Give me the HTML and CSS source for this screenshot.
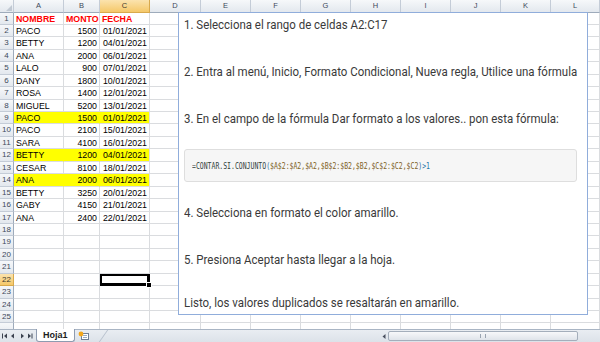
FILE: index.html
```html
<!DOCTYPE html>
<html lang="es">
<head>
  <meta charset="UTF-8" />
  <title>Hoja1 - Valores duplicados</title>
  <link rel="stylesheet" href="styles.css">
</head>
<body>

<div class="workbook">
  <div class="sheet-area">
    <div class="sheet-grid" id="sheetGrid"></div>

    <div class="note">
      <p class="step"><span>1. Selecciona el rango de celdas A2:C17</span></p>
      <p class="step step-gap"><span>2. Entra al menú, Inicio, Formato Condicional, Nueva regla, Utilice una fórmula</span></p>
      <p class="step step-gap"><span>3. En el campo de la fórmula Dar formato a los valores.. pon esta fórmula:</span></p>
      <div class="formula-box">
        <code><span class="f-name">=CONTAR.SI.CONJUNTO</span><span class="f-paren">(</span><span class="f-ref">$A$2:$A2,$A2,$B$2:$B2,$B2,$C$2:$C2,$C2</span><span class="f-paren">)&gt;1</span></code>
      </div>
      <p class="step step-4"><span>4. Selecciona en formato el color amarillo.</span></p>
      <p class="step step-gap"><span>5. Presiona Aceptar hasta llegar a la hoja.</span></p>
      <p class="step step-last"><span>Listo, los valores duplicados se resaltarán en amarillo.</span></p>
    </div>
  </div>

  <div class="tab-bar">
    <div class="tab-nav">
      <svg width="34" height="8" viewBox="0 0 34 8">
        <rect x="2" y="1.5" width="1" height="5" fill="#3b4250"/>
        <path d="M7 1.5 L4 4 L7 6.5Z" fill="#3b4250"/>
        <path d="M14 1.5 L11 4 L14 6.5Z" fill="#3b4250"/>
        <path d="M21 1.5 L24 4 L21 6.5Z" fill="#3b4250"/>
        <path d="M28 1.5 L31 4 L28 6.5Z" fill="#3b4250"/>
        <rect x="31.5" y="1.5" width="1" height="5" fill="#3b4250"/>
      </svg>
    </div>
    <div class="sheet-tab">Hoja1</div>
    <div class="new-tab">
      <svg width="14" height="10" viewBox="0 0 14 10">
        <rect x="4.5" y="2.5" width="7" height="6" fill="#fff" stroke="#6f7f95"/>
        <path d="M6 4.5h4M6 6.5h4" stroke="#9aabc0"/>
        <circle cx="4" cy="3" r="2.4" fill="#f3a71c"/>
      </svg>
    </div>
    <div class="tab-slant"></div>
    <div class="h-scroll">
      <span class="scroll-arrow">
        <svg width="4" height="5" viewBox="0 0 4 5"><path d="M3.5 0 L0.5 2.5 L3.5 5Z" fill="#4a5160"/></svg>
      </span>
      <span class="scroll-thumb"><span class="grip"></span></span>
    </div>
  </div>
</div>

<script>
  const columns = ['A', 'B', 'C', 'D', 'E', 'F', 'G', 'H', 'I', 'J', 'K', 'L'];
  const rows = [
    ['NOMBRE', 'MONTO', 'FECHA'],
    ['PACO', '1500', '01/01/2021'],
    ['BETTY', '1200', '04/01/2021'],
    ['ANA', '2000', '06/01/2021'],
    ['LALO', '900', '07/01/2021'],
    ['DANY', '1800', '10/01/2021'],
    ['ROSA', '1400', '12/01/2021'],
    ['MIGUEL', '5200', '13/01/2021'],
    ['PACO', '1500', '01/01/2021'],
    ['PACO', '2100', '15/01/2021'],
    ['SARA', '4100', '16/01/2021'],
    ['BETTY', '1200', '04/01/2021'],
    ['CESAR', '8100', '18/01/2021'],
    ['ANA', '2000', '06/01/2021'],
    ['BETTY', '3250', '20/01/2021'],
    ['GABY', '4150', '21/01/2021'],
    ['ANA', '2400', '22/01/2021'],
  ];
  const duplicated = [9, 12, 14];
  const activeRow = 22;
  const activeCol = 'C';

  function buildSheet() {
    const grid = document.getElementById('sheetGrid');

    function addCell(className, text) {
      const div = document.createElement('div');
      div.className = className;
      if (text !== undefined) div.textContent = text;
      grid.appendChild(div);
    }

    addCell('corner');
    columns.forEach(col => {
      addCell(col === activeCol ? 'col-head is-active' : 'col-head', col);
    });

    for (let r = 1; r <= 26; r++) {
      const label = r < 26 ? r : undefined;
      addCell(r === activeRow ? 'row-head is-active' : 'row-head', label);
      const values = rows[r - 1] || [];
      columns.forEach((col, i) => {
        let cls = 'cell';
        if (r === 1 && i < 3) cls += ' title';
        if (r > 1 && i > 0 && i < 3) cls += ' num';
        if (duplicated.includes(r) && i < 3) cls += ' dup';
        if (duplicated.includes(r) && i < 2) cls += ' dup-inner';
        if (r === activeRow && col === activeCol) cls += ' is-selected';
        addCell(cls, values[i]);
      });
    }
  }

  document.addEventListener('DOMContentLoaded', buildSheet);
</script>

</body>
</html>
```

FILE: styles.css
```css
body {
  margin: 0;
  padding: 0;
  background-color: #fff;
  font-family: 'Liberation Sans', Arial, sans-serif;
}

.workbook {
  width: 600px;
  height: 342px;
  display: flex;
  flex-direction: column;
  overflow: hidden;
}

.sheet-area {
  position: relative;
  height: 329px;
  overflow: hidden;
}

.sheet-grid {
  display: grid;
  grid-template-columns: 14px 50px 36px 50px 51px repeat(7, 50px) 1fr;
  grid-template-rows: 12.5px;
  grid-auto-rows: 12.45px;
}

.corner,
.col-head,
.row-head {
  box-sizing: border-box;
  background: linear-gradient(#f6f8fa, #e3e8ee);
  border-right: 1px solid #c4ccd7;
  border-bottom: 1px solid #c4ccd7;
  color: #3d4a5b;
  font-size: 7.5px;
  text-align: center;
  line-height: 12px;
}

.corner {
  position: relative;
  border-bottom-color: #9eabbb;
}

.corner::after {
  content: '';
  position: absolute;
  right: 1px;
  bottom: 1px;
  border-left: 6px solid transparent;
  border-bottom: 6px solid #c1c9d3;
}

.col-head {
  border-bottom-color: #9eabbb;
}

.row-head {
  font-size: 8px;
  border-right-color: #9eabbb;
}

.col-head.is-active,
.row-head.is-active {
  background: linear-gradient(#fbe3ae, #f5c869);
  color: #3d3a30;
  border-color: #d8a94c;
}

.cell {
  box-sizing: border-box;
  position: relative;
  border-right: 1px solid #dadcdf;
  border-bottom: 1px solid #dadcdf;
  font-size: 8.8px;
  line-height: 12px;
  padding: 0 2px;
  white-space: nowrap;
  color: #000;
}

.cell.title {
  color: #ff0000;
  font-weight: 700;
}

.cell.num {
  text-align: right;
}

.cell.dup {
  background-color: #ffff00;
}

.cell.dup-inner {
  border-right-color: #ffff00;
}

.cell.is-selected {
  box-shadow: inset 0 0 0 2px #000;
  border-right-color: #000;
  border-bottom-color: #000;
}

.cell.is-selected::after {
  content: '';
  position: absolute;
  right: -3px;
  bottom: -3px;
  width: 4px;
  height: 4px;
  background-color: #000;
  border: 1px solid #fff;
  z-index: 2;
}

/* text box over the sheet */
.note {
  position: absolute;
  left: 178px;
  top: 12px;
  width: 410px;
  height: 303px;
  box-sizing: border-box;
  padding: 3px 5px 0;
  background-color: #fff;
  border: 1px solid #90addb;
  font-family: Roboto, 'Liberation Sans', sans-serif;
  color: #3a3a3a;
  z-index: 3;
}

.step {
  margin: 0;
  height: 16px;
  line-height: 16px;
  font-size: 13.5px;
  white-space: nowrap;
}

.step span {
  display: inline-block;
  transform: scaleX(0.85);
  transform-origin: 0 50%;
}

.step-gap {
  margin-top: 31px;
}

.step-4 {
  margin-top: 22px;
}

.step-last {
  margin-top: 27px;
}

.formula-box {
  margin: 23px 5px 0 0;
  height: 33px;
  box-sizing: border-box;
  padding-left: 7px;
  background-color: #f6f6f6;
  border: 1px solid #dedede;
  border-radius: 3px;
  display: flex;
  align-items: center;
  white-space: nowrap;
}

.formula-box code {
  display: inline-block;
  font-family: 'DejaVu Sans Mono', 'Liberation Mono', monospace;
  font-size: 9px;
  transform: scaleX(0.72);
  transform-origin: 0 50%;
}

.f-name {
  color: #33423c;
}

.f-paren {
  color: #1f74a8;
}

.f-ref {
  color: #7d5f1e;
}

/* sheet tabs and scroll bar */
.tab-bar {
  height: 13px;
  display: flex;
  align-items: stretch;
  background: linear-gradient(#e9edf2, #dce2e9);
  border-top: 1px solid #a9b5c4;
  box-sizing: border-box;
}

.tab-nav {
  width: 36px;
  display: flex;
  align-items: center;
}

.sheet-tab {
  margin-top: -1px;
  padding: 0 6px;
  background-color: #fff;
  border: 1px solid #8e9bb0;
  border-top: none;
  border-radius: 0 0 3px 3px;
  font-size: 9px;
  font-weight: 700;
  line-height: 12px;
  color: #1c1c1c;
}

.new-tab {
  width: 18px;
  display: flex;
  align-items: center;
  justify-content: center;
}

.tab-slant {
  width: 10px;
  border-right: 1px solid #b6c0cd;
  transform: skewX(-35deg);
}

.h-scroll {
  margin-left: auto;
  margin-right: 22px;
  width: 197px;
  display: flex;
  align-items: center;
  gap: 2px;
}

.scroll-arrow {
  width: 5px;
  display: flex;
  justify-content: center;
}

.scroll-thumb {
  flex: 1;
  height: 8px;
  border: 1px solid #a4aebb;
  border-radius: 2px;
  background: linear-gradient(#f7f8fa, #dfe4ea);
  display: flex;
  align-items: center;
  justify-content: center;
}

.grip {
  width: 4px;
  height: 4px;
  border-left: 1px solid #9aa4b1;
  border-right: 1px solid #9aa4b1;
  position: relative;
}
```
